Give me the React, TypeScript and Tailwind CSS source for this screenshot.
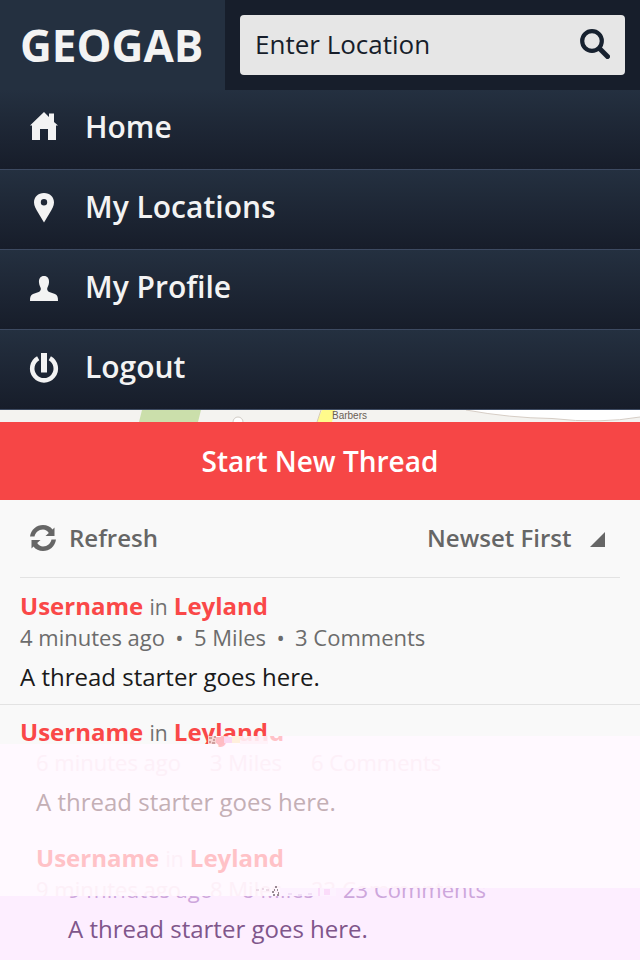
import type { ReactNode } from "react";

const navItems: { label: string; icon: ReactNode }[] = [
  {
    label: "Home",
    icon: (
      <path d="M14-1 19 4V.5H24V9L28 12.5H26V27H18V16H10V27H2V12.5H0Z" />
    ),
  },
  {
    label: "My Locations",
    icon: (
      <path
        fillRule="evenodd"
        d="M14 0C20 0 24 4 24 9.500C24 13 22 16 20 19.500L14 29.500 8 19.500C6 16 4 13 4 9.500C4 4 8 0 14 0ZM14 6A3.200 3.200 0 1 0 14 12.400 3.200 3.200 0 1 0 14 6Z"
      />
    ),
  },
  {
    label: "My Profile",
    icon: (
      <path d="M14 3C17.500 3 19.300 5.500 19 9.500C18.800 12.500 17.500 13.500 17.200 15.500C17 17.500 18 18.600 20 19.200L25 21C27.500 22 28 24 28 28H0C0 24 .5 22 3 21L8 19.200C10 18.600 11 17.500 10.800 15.500C10.500 13.500 9.200 12.500 9 9.500C8.700 5.500 10.500 3 14 3Z" />
    ),
  },
  {
    label: "Logout",
    icon: (
      <>
        <path d="M11 0H17V19.500H11Z" />
        <path
          d="M8.200 5.300A11.800 11.800 0 1 0 19.800 5.300"
          fill="none"
          stroke="currentColor"
          strokeWidth="4.600"
        />
      </>
    ),
  },
];

type Tone = { name: string; joiner: string; meta: string; dot: string; body: string };

const plain: Tone = {
  name: "font-bold text-[#fa4848]",
  joiner: "text-[#707070]",
  meta: "text-[#6c6c6c]",
  dot: "text-[#6c6c6c]",
  body: "text-[#1a1a1a]",
};
const faded: Tone = {
  name: "font-bold text-[#ffc2c7]",
  joiner: "text-[#fdf0f8]",
  meta: "text-[#fdf0f8]",
  dot: "text-transparent",
  body: "text-[#c4afb5]",
};
const violet: Tone = {
  name: "font-bold text-[#d080c0]",
  joiner: "text-[#c9a3d9]",
  meta: "text-[#cda6dc]",
  dot: "text-transparent",
  body: "text-[#80568b]",
};

function Byline({ tone }: { tone: Tone }) {
  return (
    <p className="text-2xl leading-8">
      <a href="#user" className={tone.name}>Username</a>{" "}
      <span className={`text-[21px] ${tone.joiner}`}>in</span>{" "}
      <a href="#place" className={tone.name}>Leyland</a>
    </p>
  );
}

function Meta({ tone, parts }: { tone: Tone; parts: string[] }) {
  return (
    <p className={`flex text-[22px] leading-7 ${tone.meta}`}>
      {parts.map((part, i) => (
        <span key={part} className="flex whitespace-nowrap">
          {i > 0 && <span className={`w-[29px] text-center ${tone.dot}`}>•</span>}
          {part}
        </span>
      ))}
    </p>
  );
}

function Body({ tone }: { tone: Tone }) {
  return <p className={`mt-[10px] text-2xl leading-8 ${tone.body}`}>A thread starter goes here.</p>;
}

export default function App() {
  return (
    <div className="min-h-screen overflow-hidden bg-[#f9f9f9] font-['Open_Sans','Noto_Sans',sans-serif]">
      <header className="flex bg-[#171e2b]">
        <h1 className="flex h-[90px] w-[225px] shrink-0 items-center bg-[#243040] pl-5 text-[44px] font-bold text-[#f3f3f3]">
          GEOGAB
        </h1>
        <form className="min-w-0 flex-1 p-[15px]">
          <div className="flex h-[60px] items-center rounded bg-[#e6e6e6] pr-[15px] pb-[2px] pl-[15px]">
            <label htmlFor="location" className="sr-only">Enter Location</label>
            <input
              id="location"
              type="text"
              placeholder="Enter Location"
              className="h-10 min-w-0 flex-1 bg-transparent text-[26px] text-[#171e2b] outline-none placeholder:text-[#171e2b]"
            />
            <button type="button" aria-label="Search">
              <svg className="size-[30px]" viewBox="0 0 30 30" fill="none" stroke="#17212f">
                <circle cx="12" cy="12" r="9.800" strokeWidth="4.200" />
                <path d="M19.500 19.500 27.500 27.500" strokeWidth="5" strokeLinecap="round" />
              </svg>
            </button>
          </div>
        </form>
      </header>

      <nav>
        {navItems.map((item) => (
          <a
            key={item.label}
            href="#menu"
            className="flex h-20 items-center gap-[27px] border-b border-[#3d4a61] bg-linear-to-b from-[#243040] to-[#171d2a] pb-[6px] pl-[30px] text-3xl font-semibold text-[#f3f3f3]"
          >
            <svg className="size-7 overflow-visible" viewBox="0 0 28 28" fill="currentColor" aria-hidden="true">
              {item.icon}
            </svg>
            {item.label}
          </a>
        ))}
      </nav>

      <div className="relative h-3 overflow-hidden bg-[#f4f3f0]">
        <svg className="h-3 w-[640px]" viewBox="0 0 640 12" aria-hidden="true">
          <path d="M142 0H201L198 12H139Z" fill="#cbdfab" />
          <circle cx="238" cy="12" r="5" fill="#fff" stroke="#d0cbc5" />
          <path d="M322 0H335L332 12H317Z" fill="#fffb8b" />
          <path d="M321 0 317 12" stroke="#d8ccb0" />
          <path d="M466 0Q510 8 552 8.500Q600 14 640 7V0Z" fill="#fff" />
          <path d="M466 0Q510 8 552 8.500Q600 14 640 7" fill="none" stroke="#d6cdc5" />
        </svg>
        <span className="absolute top-0 left-[332px] font-['Liberation_Sans',Arial,sans-serif] text-[10px] leading-3 text-[#6b5f56]">
          Barbers
        </span>
      </div>

      <button type="button" className="block h-[78px] w-full bg-[#f64646] text-[28px] font-semibold text-white">
        Start New Thread
      </button>

      <main>
        <div className="mx-5 flex h-[78px] items-center justify-between border-b border-[#e3e3e3] pr-[15px] pb-[2px] pl-[10px] text-2xl font-semibold text-[#666]">
          <button type="button" className="flex items-center gap-[13px]">
            <svg className="size-[26px]" viewBox="0 0 26 26" fill="currentColor" aria-hidden="true">
              <path d="M0 11.500C1 4.500 6.500 0 13 0C17 0 20.500 1.700 22.500 4.500L24.500 2.500V11H15.500L18.800 8C17.400 6 15.400 4.500 13 4.500C8.500 4.500 5.500 7.500 4.500 11.500Z" />
              <path d="M26 14.500C25 21.500 19.500 26 13 26C9 26 5.500 24.300 3.500 21.500L1.500 23.500V15H10.500L7.200 18C8.600 20 10.600 21.500 13 21.500C17.500 21.500 20.500 18.500 21.500 14.500Z" />
            </svg>
            Refresh
          </button>
          <div className="flex items-center gap-[18px]">
            <label htmlFor="sort" className="sr-only">Sort threads</label>
            <select id="sort" className="appearance-none bg-transparent">
              <option>Newset First</option>
            </select>
            <svg className="mt-1 size-[15px]" viewBox="0 0 15 15" fill="currentColor" aria-hidden="true">
              <path d="M15 0V15H0Z" />
            </svg>
          </div>
        </div>

        <article className="h-[126px] px-5 pt-3">
          <Byline tone={plain} />
          <Meta tone={plain} parts={["4 minutes ago", "5 Miles", "3 Comments"]} />
          <Body tone={plain} />
        </article>

        <article className="h-10 border-t border-[#e3e3e3] px-5 pt-[11px]">
          <Byline tone={plain} />
        </article>

        {/* Stepped top edge: the right part of the band starts 8px higher */}
        <section className="relative z-10 -mt-2 h-40 bg-[#fff9ff] pt-3 pl-9 [clip-path:polygon(208px_0,100%_0,100%_100%,0_100%,0_8px,208px_8px)]">
          <span className="absolute -top-5 left-[190px] text-2xl leading-8 font-bold text-[#ffc2c7]">Leyland</span>
          <svg className="absolute top-0 left-[204px] h-[10px] w-16" viewBox="0 0 64 10" aria-hidden="true">
            <path d="M4 0H12V8H4Z" fill="#f6d5d3" />
            <path d="M5 2H8M9 4H11M5 6H7M10 1H12M8 7H11" stroke="#a86868" />
            <path d="M12 1H20V8L16 10 12 7Z" fill="#ffbcc4" />
            <path d="M20 1H28V7H20Z" fill="#fbd9f2" />
            <path d="M28 0H36V7H28Z" fill="#fff0dc" />
            <path d="M36 0H64V8H36Z" fill="#fff0f6" fillOpacity=".7" />
          </svg>
          <Meta tone={faded} parts={["6 minutes ago", "3 Miles", "6 Comments"]} />
          <Body tone={faded} />
          <div className="mt-6">
            <Byline tone={faded} />
            <Meta tone={faded} parts={["9 minutes ago", "8 Miles", "23 Comments"]} />
          </div>
        </section>

        <section className="relative z-20 -mt-2 h-[72px] overflow-hidden bg-[#fdeeff] pl-[68px] [clip-path:polygon(280px_0,100%_0,100%_100%,0_100%,0_8px,280px_8px)]">
          <div className="-mt-[13px]">
            <Meta tone={violet} parts={["9 minutes ago", "8 Miles", "23 Comments"]} />
            <Body tone={violet} />
          </div>
          <svg className="absolute top-0 left-[280px] h-2 w-14" viewBox="0 0 56 8" aria-hidden="true">
            <path d="M0 0H56V8H0Z" fill="#fdf2ff" />
            <path d="M8 6H12M18 7H22M28 6H32" stroke="#e6cdf0" />
            <path d="M38 0H40V8H38ZM44 1H50V7H44Z" fill="#fbdcfa" />
          </svg>
        </section>
        <svg
          className="pointer-events-none relative z-30 -mt-[74px] ml-[256px] h-[10px] w-6"
          viewBox="0 0 24 10"
          aria-hidden="true"
        >
          <path d="M0 4H3M6 3H8M10 4H13" stroke="#d9bcd0" />
          <path d="M19 1H21M18 4H19M21 4H22M16 6H18M22 7H23M17 9H19M21 9H23" stroke="#33202c" />
        </svg>
      </main>
    </div>
  );
}
